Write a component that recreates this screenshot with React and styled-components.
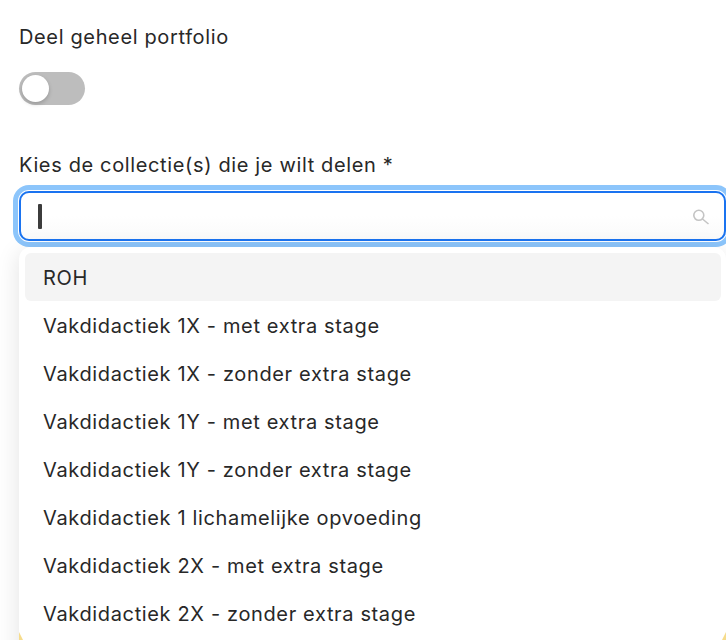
import React from "react";
import styled, { createGlobalStyle } from "styled-components";

const Global = createGlobalStyle`
  html, body { margin: 0; padding: 0; background: #fff; }
  body { width: 726px; height: 640px; overflow: hidden; font-family: Inter, "Liberation Sans", sans-serif; }
`;

const Page = styled.div`
  position: relative;
  width: 726px;
  height: 640px;
  overflow: hidden;
  box-sizing: border-box;
  padding: 24px 0 0 19px;
  background: #fff;
`;

const Label = styled.div`
  font-size: 20px;
  line-height: 26px;
  letter-spacing: 0.64px;
  color: #282828;
`;

const Toggle = styled.div`
  width: 66px;
  height: 33px;
  margin: 22px 0 47px;
  border-radius: 17px;
  background: #bdbdbd;
  display: flex;
  align-items: center;
  padding-left: 3px;
  box-sizing: border-box;
`;

const Knob = styled.div`
  width: 27px;
  height: 27px;
  border-radius: 50%;
  background: #fff;
  box-shadow: 0 2px 4px rgba(0, 0, 0, 0.2);
`;

const Field = styled.div`
  position: relative;
  height: 50px;
  margin-top: 13px;
  box-sizing: border-box;
  border: 2px solid #1a73f0;
  border-radius: 10px;
  background: linear-gradient(#fff 50%, #fafafa);
  box-shadow: 0 0 0 1px #fff, 0 0 0 6px #8cc5fb;
  display: flex;
  align-items: center;
  justify-content: space-between;
  padding: 0 14px 0 17px;
`;

const Caret = styled.div`
  width: 4px;
  height: 25px;
  border-radius: 1px;
  background: #3c3c3c;
`;

const SearchIcon = styled.svg`
  width: 20px;
  height: 20px;
  fill: none;
  stroke: #c4c4c4;
  stroke-width: 1.6;
`;

const Menu = styled.ul`
  position: absolute;
  z-index: 1;
  left: 19px;
  top: 247px;
  width: 707px;
  height: 420px;
  margin: 0;
  padding: 6px 5px 0 6px;
  box-sizing: border-box;
  list-style: none;
  background: #fff;
  border-radius: 12px;
  box-shadow: -2px 4px 22px rgba(0, 0, 0, 0.1);
  overflow: hidden;
`;

const Item = styled.li`
  height: 48px;
  display: flex;
  align-items: center;
  padding-left: 18px;
  padding-top: 1px;
  box-sizing: border-box;
  border-radius: 6px;
  font-size: 20px;
  letter-spacing: 0.64px;
  color: #282828;
  background: ${(p) => (p.$active ? "#f4f4f4" : "transparent")};
`;

const Wedge = styled.div`
  position: absolute;
  z-index: 2;
  bottom: 0;
  ${(p) => (p.$right ? "right: 0; width: 4px;" : "left: 19px; width: 4px;")}
  height: 8px;
  background: #f6dc8c;
  clip-path: ${(p) =>
    p.$right
      ? "polygon(100% 0, 100% 100%, 0 100%)"
      : "polygon(0 0, 100% 100%, 0 100%)"};
`;

const items = [
  "ROH",
  "Vakdidactiek 1X - met extra stage",
  "Vakdidactiek 1X - zonder extra stage",
  "Vakdidactiek 1Y - met extra stage",
  "Vakdidactiek 1Y - zonder extra stage",
  "Vakdidactiek 1 lichamelijke opvoeding",
  "Vakdidactiek 2X - met extra stage",
  "Vakdidactiek 2X - zonder extra stage",
];

export default function App() {
  return (
    <Page>
      <Global />
      <Label>Deel geheel portfolio</Label>
      <Toggle>
        <Knob />
      </Toggle>
      <Label>Kies de collectie(s) die je wilt delen *</Label>
      <Field>
        <Caret />
        <SearchIcon viewBox="0 0 20 20">
          <circle cx="8.8" cy="9.3" r="5" />
          <path d="M12.5 13 L18.5 18" />
        </SearchIcon>
      </Field>
      <Menu>
        {items.map((t, i) => (
          <Item key={t} $active={i === 0}>{t}</Item>
        ))}
      </Menu>
      <Wedge />
      <Wedge $right />
    </Page>
  );
}
